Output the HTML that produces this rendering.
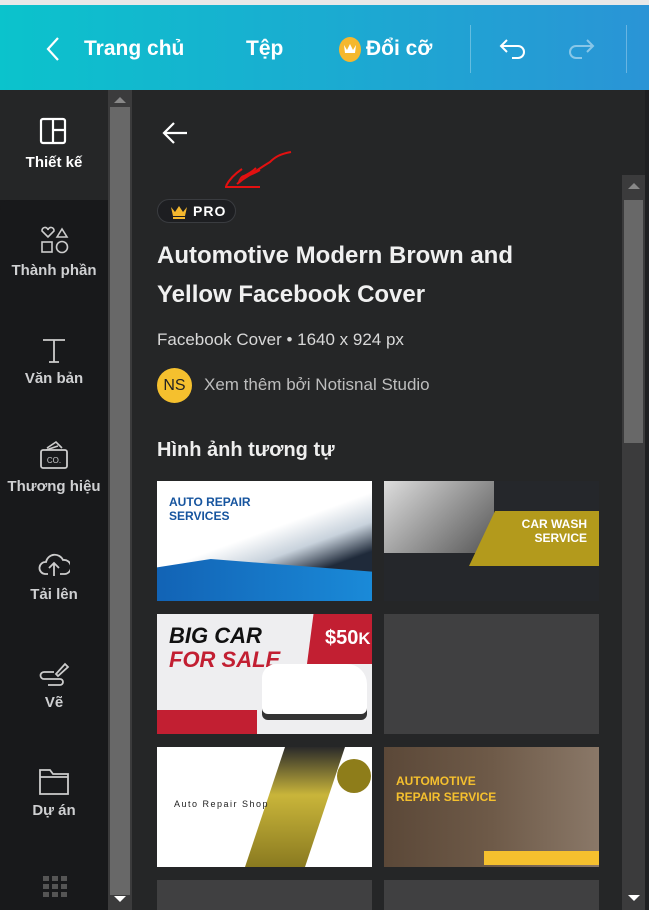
<!DOCTYPE html>
<html><head><meta charset="utf-8"><style>
*{margin:0;padding:0;box-sizing:border-box}
html,body{width:649px;height:910px;overflow:hidden}
body{background:#252627;font-family:"Liberation Sans","Noto Sans CJK SC",sans-serif;position:relative;color:#fff}
.abs{position:absolute}
.top{left:0;top:0;width:649px;height:90px;background:linear-gradient(90deg,#0bc3cc,#2a94d6);border-top:5px solid #e8e8e8}
.top span{position:absolute;top:32px;font-size:21px;font-weight:bold;color:#fff}
.side{left:0;top:90px;width:108px;height:820px;background:#18191b}
.act{left:0;top:90px;width:108px;height:110px;background:#252627}
.sb{position:absolute;left:0;width:108px;text-align:center;font-size:15px;font-weight:bold;color:#cfd0d2}
.ic{position:absolute;left:38px;width:32px;height:32px}
.tile{position:absolute;width:215px;height:120px;background:#404041}
</style></head><body>
<div class="abs top">
<svg class="abs" style="left:45px;top:30px" width="16" height="28"><path d="M13 3 L3 14 L13 25" stroke="#fff" stroke-width="2.2" fill="none"/></svg>
<span style="left:84px">Trang chủ</span>
<span style="left:246px">Tệp</span>
<div class="abs" style="left:339px;top:32px;width:22px;height:25px;border-radius:50%;background:#f5b82e"></div>
<svg class="abs" style="left:342px;top:37px" width="16" height="14"><path d="M2 3 L5 8 L8 2 L11 8 L14 3 L13 11 L3 11Z" fill="#fff"/></svg>
<span style="left:366px">Đổi cỡ</span>
<div class="abs" style="left:470px;top:20px;width:1px;height:48px;background:rgba(255,255,255,.3)"></div>
<svg class="abs" style="left:498px;top:30px" width="30" height="30"><path d="M9 5 L3 11 L9 17 M3 11 H20 A6 6 0 0 1 20 23 H14" stroke="#fff" stroke-width="2" fill="none"/></svg>
<svg class="abs" style="left:566px;top:30px" width="30" height="30"><path d="M21 5 L27 11 L21 17 M27 11 H10 A6 6 0 0 0 10 23 H16" stroke="rgba(255,255,255,.45)" stroke-width="2" fill="none"/></svg>
<div class="abs" style="left:626px;top:20px;width:1px;height:48px;background:rgba(255,255,255,.3)"></div>
</div>
<div class="abs side"></div>
<div class="abs act"></div>
<div class="abs" style="left:0;top:200px;width:108px;height:10px;background:#18191b;border-radius:10px 0 0 0"></div>
<svg class="ic" style="top:117px;left:39px" width="28" height="28"><rect x="2" y="2" width="24" height="24" rx="2" stroke="#fff" stroke-width="2.2" fill="none"/><path d="M14 2 V26 M14 13 H26" stroke="#fff" stroke-width="2.2"/></svg>
<div class="sb" style="top:154px;color:#fff">Thiết kế</div>
<svg class="ic" style="top:225px" width="32" height="32"><path d="M4 6 a3 3 0 0 1 6 -1 a3 3 0 0 1 6 1 L10 12 Z M19 12 L24 4 L29 12Z" stroke="#ccc" stroke-width="1.6" fill="none"/><rect x="4" y="17" width="10" height="10" stroke="#ccc" stroke-width="1.6" fill="none"/><circle cx="24" cy="22" r="5.5" stroke="#ccc" stroke-width="1.6" fill="none"/></svg>
<div class="sb" style="top:262px">Thành phần</div>
<svg class="ic" style="top:336px" width="32" height="32"><path d="M5 4 H27 M16 4 V26 M11 26 H21" stroke="#ccc" stroke-width="1.8" fill="none"/></svg>
<div class="sb" style="top:370px">Văn bản</div>
<svg class="ic" style="top:440px" width="32" height="32"><path d="M9 8 L18 2 L24 8 M8 10 L20 6" stroke="#ccc" stroke-width="1.6" fill="none"/><rect x="3" y="10" width="26" height="18" rx="2" stroke="#ccc" stroke-width="1.8" fill="none"/><text x="16" y="23" font-size="8" fill="#ccc" text-anchor="middle" font-family="Liberation Sans">CO.</text></svg>
<div class="sb" style="top:478px">Thương hiệu</div>
<svg class="ic" style="top:550px" width="34" height="30"><path d="M10 24 H7 A6 6 0 0 1 8 12 A9 9 0 0 1 25 10 A6 6 0 0 1 27 24 H22 M16 26 V13 M11 18 L16 13 L21 18" stroke="#ccc" stroke-width="1.8" fill="none"/></svg>
<div class="sb" style="top:586px">Tải lên</div>
<svg class="ic" style="top:658px" width="32" height="32"><path d="M18 16 L27 6 L30 9 L20 18 Z M16 14 H6 A3 3 0 0 0 6 21 H22 A3 3 0 0 1 22 27 H10" stroke="#ccc" stroke-width="1.8" fill="none"/></svg>
<div class="sb" style="top:694px">Vẽ</div>
<svg class="ic" style="top:766px" width="32" height="32"><path d="M2 4 H12 L15 8 H30 V28 H2 Z M2 11 H30" stroke="#ccc" stroke-width="1.8" fill="none"/></svg>
<div class="sb" style="top:802px">Dự án</div>
<svg class="abs" style="left:43px;top:876px" width="24" height="34"><g fill="#555"><rect x="0" y="0" width="6" height="5"/><rect x="9" y="0" width="6" height="5"/><rect x="18" y="0" width="6" height="5"/><rect x="0" y="8" width="6" height="5"/><rect x="9" y="8" width="6" height="5"/><rect x="18" y="8" width="6" height="5"/><rect x="0" y="16" width="6" height="5"/><rect x="9" y="16" width="6" height="5"/><rect x="18" y="16" width="6" height="5"/></g></svg>
<div class="abs" style="left:108px;top:90px;width:24px;height:820px;background:#3b3b3c"></div>
<div class="abs" style="left:110px;top:107px;width:20px;height:788px;background:#686868"></div>
<svg class="abs" style="left:113px;top:96px" width="14" height="8"><path d="M1 7 L7 1 L13 7Z" fill="#888"/></svg>
<svg class="abs" style="left:113px;top:895px" width="14" height="8"><path d="M1 1 L7 7 L13 1Z" fill="#fff"/></svg>

<svg class="abs" style="left:160px;top:120px" width="30" height="26"><path d="M14 3 L4 13 L14 23 M4 13 H27" stroke="#fff" stroke-width="2.2" fill="none"/></svg>
<svg class="abs" style="left:220px;top:148px" width="80" height="45"><path d="M71 4 C60 6 55 9 50 14 C45 17 42 19 39 21 C33 25 28 28 22 32 C20 34 18 35 17 36 M40 22 C33 26 28 28 22 30 M36 20 C33 23 28 26 24 28 C22 28 20 31 19 34 M6 38 C10 30 16 25 22 21 M5 39 H40" stroke="#e31010" stroke-width="2" fill="none"/></svg>
<div class="abs" style="left:157px;top:199px;width:79px;height:24px;border-radius:12px;background:#1d1e21;border:1px solid #3a3c40"></div>
<svg class="abs" style="left:169px;top:204px" width="20" height="16"><path d="M2 3 L6 8 L10 2 L14 8 L18 3 L16 12 L4 12Z" fill="#f5b82e"/><rect x="4" y="13" width="12" height="2" fill="#f5b82e"/></svg>
<div class="abs" style="left:193px;top:203px;font-size:14px;font-weight:bold;letter-spacing:1px">PRO</div>
<div class="abs" style="left:157px;top:236px;font-size:24px;font-weight:bold;line-height:39px;color:#f0f0f0;width:395px">Automotive Modern Brown and Yellow Facebook Cover</div>
<div class="abs" style="left:157px;top:330px;font-size:17px;color:#d8d8d8">Facebook Cover • 1640 x 924 px</div>
<div class="abs" style="left:157px;top:368px;width:35px;height:35px;border-radius:50%;background:#f5c02e;color:#222;font-size:16px;text-align:center;line-height:35px">NS</div>
<div class="abs" style="left:204px;top:375px;font-size:17px;color:#bdbdbd">Xem thêm bởi Notisnal Studio</div>
<div class="abs" style="left:157px;top:439px;font-size:20px;font-weight:bold;color:#eee">Hình ảnh tương tự</div>

<div class="tile" style="left:157px;top:481px;background:linear-gradient(160deg,#fff 45%,#c8d2dc 60%,#1f2a3a 75%);overflow:hidden">
<div class="abs" style="left:0;top:78px;width:215px;height:42px;background:linear-gradient(90deg,#1263b5,#1a8ad8);clip-path:polygon(0 20%,25% 0,100% 30%,100% 100%,0 100%)"></div>
<div class="abs" style="left:12px;top:14px;font-size:12px;font-weight:bold;color:#16549e;line-height:14px">AUTO REPAIR<br>SERVICES</div>
</div>
<div class="tile" style="left:384px;top:481px;background:#25272b;overflow:hidden">
<div class="abs" style="left:0;top:0;width:110px;height:72px;background:linear-gradient(135deg,#ddd,#555)"></div>
<div class="abs" style="left:85px;top:30px;width:130px;height:55px;background:#b39a1c;clip-path:polygon(20% 0,100% 0,100% 100%,0 100%)"></div>
<div class="abs" style="left:115px;top:36px;font-size:12px;font-weight:bold;text-align:right;width:88px;line-height:14px">CAR WASH<br>SERVICE</div>
</div>
<div class="tile" style="left:157px;top:614px;background:#eeeef0;overflow:hidden">
<div class="abs" style="left:150px;top:0;width:65px;height:50px;background:#c21f32;clip-path:polygon(10% 0,100% 0,100% 100%,0 100%)"></div>
<div class="abs" style="left:168px;top:13px;font-size:20px;font-weight:bold">$50<small>K</small></div>
<div class="abs" style="left:12px;top:10px;font-size:22px;font-weight:bold;font-style:italic;line-height:24px;color:#111">BIG CAR<br><span style="color:#c21f32">FOR SALE</span></div>
<div class="abs" style="left:105px;top:50px;width:105px;height:50px;background:#fff;border-radius:14px 20px 6px 6px;box-shadow:0 6px 0 #333"></div>
<div class="abs" style="left:0;top:96px;width:100px;height:24px;background:#c21f32"></div>
</div>
<div class="tile" style="left:384px;top:614px"></div>
<div class="tile" style="left:157px;top:747px;background:#fff;overflow:hidden">
<div class="abs" style="left:88px;top:0;width:100px;height:120px;background:linear-gradient(180deg,#2a2a2a,#c9b53a 40%,#8a7a20);clip-path:polygon(40% 0,100% 0,60% 100%,0 100%)"></div>
<div class="abs" style="left:180px;top:12px;width:34px;height:34px;border-radius:50%;background:#8e7d1a"></div>
<div class="abs" style="left:17px;top:52px;font-size:9px;color:#222;letter-spacing:1.5px">Auto Repair Shop</div>
</div>
<div class="tile" style="left:384px;top:747px;background:linear-gradient(90deg,#5b4838,#6e5a48 50%,#8a7868);overflow:hidden">
<div class="abs" style="left:12px;top:26px;font-size:12px;font-weight:bold;color:#f5c02e;line-height:16px">AUTOMOTIVE<br>REPAIR SERVICE</div>
<div class="abs" style="left:100px;top:104px;width:115px;height:14px;background:#f5c02e"></div>
</div>
<div class="tile" style="left:157px;top:880px;height:30px"></div>
<div class="tile" style="left:384px;top:880px;height:30px"></div>

<div class="abs" style="left:622px;top:175px;width:23px;height:735px;background:#3b3b3c"></div>
<div class="abs" style="left:624px;top:200px;width:19px;height:243px;background:#686868"></div>
<svg class="abs" style="left:627px;top:182px" width="14" height="8"><path d="M1 7 L7 1 L13 7Z" fill="#888"/></svg>
<svg class="abs" style="left:627px;top:894px" width="14" height="8"><path d="M1 1 L7 7 L13 1Z" fill="#fff"/></svg>
<div class="abs" style="left:645px;top:90px;width:4px;height:820px;background:#1e1f21"></div>
</body></html>
